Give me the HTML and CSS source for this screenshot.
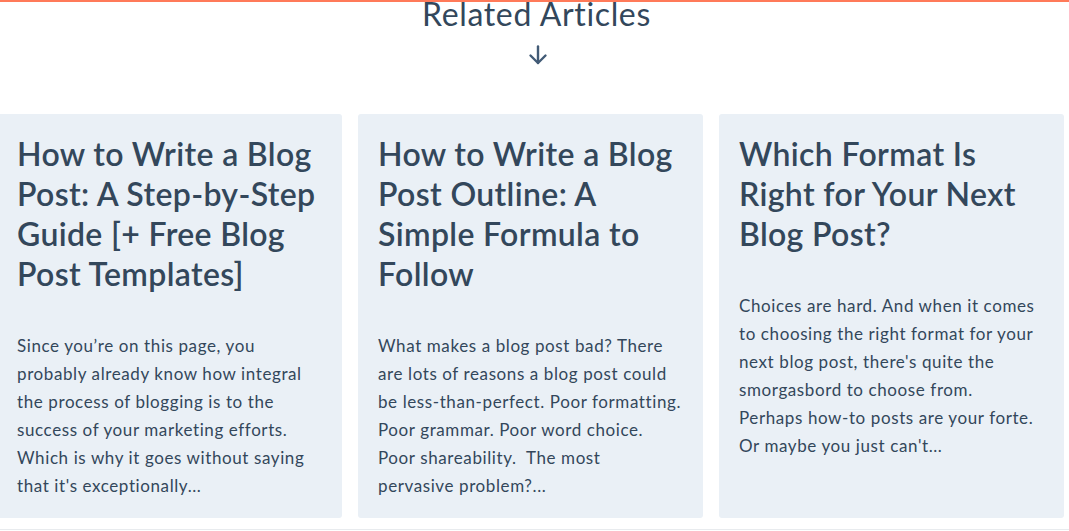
FILE: index.html
```html
<!DOCTYPE html>
<html lang="en">
<head>
  <meta charset="UTF-8" />
  <title>Related Articles</title>
  <link rel="stylesheet" href="styles.css">
</head>
<body>
  <section class="related">
    <h2 class="related-title">Related Articles</h2>
    <div class="related-arrow">
      <svg width="20" height="20" viewBox="0 0 20 20" fill="none" stroke="#425b76" stroke-width="2.4" stroke-linecap="round" stroke-linejoin="round">
        <path d="M10 1.5 V18" />
        <path d="M2.5 10.5 L10 18 L17.5 10.5" />
      </svg>
    </div>

    <div class="cards">
      <a class="card" href="#">
        <h3 class="card-title">How to Write a Blog Post: A Step-by-Step Guide [+ Free Blog Post Templates]</h3>
        <p class="card-text">Since you’re on this page, you<br>probably already know how integral<br>the process of blogging is to the<br>success of your marketing efforts.<br>Which is why it goes without saying<br>that it's exceptionally...</p>
      </a>
      <a class="card" href="#">
        <h3 class="card-title">How to Write a Blog Post Outline: A Simple Formula to Follow</h3>
        <p class="card-text">What makes a blog post bad? There<br>are lots of reasons a blog post could<br>be less-than-perfect. Poor formatting.<br>Poor grammar. Poor word choice.<br>Poor shareability.&nbsp; The most<br>pervasive problem?...</p>
      </a>
      <a class="card" href="#">
        <h3 class="card-title">Which Format Is Right for Your Next Blog Post?</h3>
        <p class="card-text">Choices are hard. And when it comes<br>to choosing the right format for your<br>next blog post, there's quite the<br>smorgasbord to choose from.<br>Perhaps how-to posts are your forte.<br>Or maybe you just can't...</p>
      </a>
    </div>
  </section>
</body>
</html>
```

FILE: styles.css
```css
body {
  margin: 0;
  background: #fff;
  color: #33475b;
  font-family: Lato, 'Noto Sans', sans-serif;
  border-top: 2px solid #ff7a59;
}

.related {
  padding: 0 5px 11px 0;
  border-bottom: 1px solid #e8ebee;
}

.related-title {
  margin: 0;
  padding-left: 9px;
  text-align: center;
  font-size: 32px;
  font-weight: 400;
  line-height: 24px;
  letter-spacing: 0.65px;
  color: #33475b;
}

.related-arrow {
  display: flex;
  justify-content: center;
  padding-left: 11px;
  margin-top: 19px;
  height: 20px;
}

.cards {
  display: grid;
  grid-template-columns: repeat(3, 1fr);
  gap: 16px;
  margin: 49px 0 0 -3px;
}

.card {
  background: #eaf0f6;
  border-radius: 3px;
  padding: 20px 20px 18px;
  text-decoration: none;
  color: #33475b;
}

.card-title {
  margin: 0;
  font-size: 32px;
  font-weight: 600;
  line-height: 40px;
  letter-spacing: 0.35px;
}

.card-text {
  margin: 38px 0 0;
  font-size: 17px;
  line-height: 28px;
  letter-spacing: 0.6px;
  white-space: nowrap;
}
```
